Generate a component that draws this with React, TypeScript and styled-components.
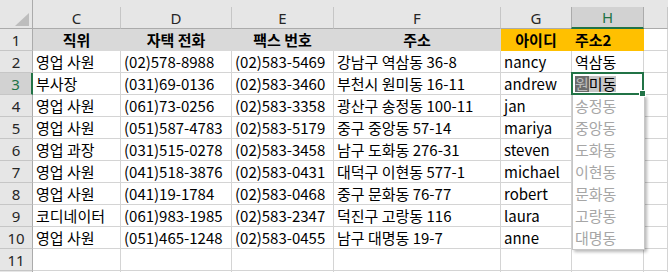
import React from "react";
import styled, { createGlobalStyle, css } from "styled-components";

const GlobalStyle = createGlobalStyle`
  html, body {
    margin: 0;
    padding: 0;
    background: #ffffff;
  }
  body {
    font-family: "Noto Sans CJK KR", "Noto Sans", sans-serif;
  }
`;

const COLS = "33px 88px 111px 102px 167px 71px 72px 1fr";
const GRID = "#d4d4d4";
const GREEN = "#217346";

const Sheet = styled.div`
  width: 668px;
  height: 272px;
  overflow: hidden;
  background: #fff;
  font-size: 15px;
  color: #000;
`;

const HeaderRow = styled.div`
  display: grid;
  grid-template-columns: ${COLS};
  height: 29px;
  padding-top: 7px;
  box-sizing: border-box;
  background: #e6e6e6;
`;

const Corner = styled.div`
  position: relative;
  border-right: 1px solid #ababab;
  border-bottom: 1px solid #ababab;
  margin-top: -7px;
  box-sizing: border-box;
`;

const CornerMark = styled.svg`
  position: absolute;
  right: 3px;
  bottom: 2px;
`;

const ColHead = styled.div<{ $selected?: boolean }>`
  display: flex;
  align-items: center;
  justify-content: center;
  box-sizing: border-box;
  border-right: 1px solid #c6c6c6;
  border-bottom: 1px solid #ababab;
  color: #262626;
  font-family: "Noto Sans", sans-serif;
  font-size: 15px;
  ${(p) =>
    p.$selected &&
    css`
      background: #d2d2d2;
      color: ${GREEN};
      border-left: 1px solid #ababab;
      margin-left: -1px;
      border-right-color: #ababab;
      border-bottom: 2px solid ${GREEN};
    `}
`;

const Row = styled.div<{ $short?: boolean }>`
  display: grid;
  grid-template-columns: ${COLS};
  height: 22px;
`;

const RowHead = styled.div<{ $selected?: boolean }>`
  display: flex;
  align-items: center;
  justify-content: center;
  box-sizing: border-box;
  background: #e6e6e6;
  border-right: 1px solid #ababab;
  border-bottom: 1px solid #c6c6c6;
  color: #262626;
  font-family: "Noto Sans", sans-serif;
  font-size: 15px;
  ${(p) =>
    p.$selected &&
    css`
      background: #d2d2d2;
      color: ${GREEN};
      border-right: 2px solid ${GREEN};
    `}
`;

const Cell = styled.div<{ $fill?: string; $center?: boolean; $bold?: boolean }>`
  position: relative;
  display: flex;
  align-items: center;
  justify-content: ${(p) => (p.$center ? "center" : "flex-start")};
  padding-left: ${(p) => (p.$center ? "0" : "3px")};
  box-sizing: border-box;
  white-space: nowrap;
  line-height: 16px;
  border-right: 1px solid ${(p) => p.$fill || GRID};
  border-bottom: 1px solid ${(p) => p.$fill || GRID};
  background: ${(p) => p.$fill || "#fff"};
  font-weight: ${(p) => (p.$bold ? 700 : 400)};
`;

const Selection = styled.div`
  position: absolute;
  top: -1px;
  left: -1px;
  right: -1px;
  bottom: -1px;
  border: 2px solid ${GREEN};
  pointer-events: none;
  z-index: 3;
`;

const FillHandle = styled.div`
  position: absolute;
  right: -4px;
  bottom: -4px;
  width: 5px;
  height: 5px;
  background: ${GREEN};
  border: 1px solid #fff;
`;

const Typed = styled.span`
  display: inline-block;
  background: #6b6b6b;
  color: #bcbcbc;
`;

const Suggested = styled.span`
  display: inline-block;
  background: #c6c6c6;
  color: #000;
`;

const Dropdown = styled.ul`
  position: absolute;
  top: 100%;
  left: 0;
  width: 71px;
  margin: 1px 0 0;
  padding: 0;
  list-style: none;
  background: #fff;
  border: 1px solid #c6c6c6;
  border-top: none;
  box-shadow: 2px 2px 3px rgba(0, 0, 0, 0.28);
  z-index: 2;
`;

const Option = styled.li`
  height: 22px;
  display: flex;
  align-items: center;
  padding-left: 2px;
  color: #a6a6a6;
  line-height: 16px;
`;

const headers = [
  { text: "직위", fill: "#d9d9d9", center: true },
  { text: "자택 전화", fill: "#d9d9d9", center: true },
  { text: "팩스 번호", fill: "#d9d9d9", center: true },
  { text: "주소", fill: "#d9d9d9", center: true },
  { text: "아이디", fill: "#ffc000", center: true },
  { text: "주소2", fill: "#ffc000", center: false },
];

const data: string[][] = [
  ["영업 사원", "(02)578-8988", "(02)583-5469", "강남구 역삼동 36-8", "nancy", "역삼동"],
  ["부사장", "(031)69-0136", "(02)583-3460", "부천시 원미동 16-11", "andrew", ""],
  ["영업 사원", "(061)73-0256", "(02)583-3358", "광산구 송정동 100-11", "jan", ""],
  ["영업 사원", "(051)587-4783", "(02)583-5179", "중구 중앙동 57-14", "mariya", ""],
  ["영업 과장", "(031)515-0278", "(02)583-3458", "남구 도화동 276-31", "steven", ""],
  ["영업 사원", "(041)518-3876", "(02)583-0431", "대덕구 이현동 577-1", "michael", ""],
  ["영업 사원", "(041)19-1784", "(02)583-0468", "중구 문화동 76-77", "robert", ""],
  ["코디네이터", "(061)983-1985", "(02)583-2347", "덕진구 고랑동 116", "laura", ""],
  ["영업 사원", "(051)465-1248", "(02)583-0455", "남구 대명동 19-7", "anne", ""],
];

const suggestions = ["송정동", "중앙동", "도화동", "이현동", "문화동", "고랑동", "대명동"];

const columns = ["C", "D", "E", "F", "G", "H"];

const App = () => {
  return (
    <Sheet>
      <GlobalStyle />
      <HeaderRow>
        <Corner>
          <CornerMark width="14" height="13" viewBox="0 0 14 13">
            <polygon points="14,0 14,13 0,13" fill="#bdbdbd" />
          </CornerMark>
        </Corner>
        {columns.map((c) => (
          <ColHead key={c} $selected={c === "H"}>
            {c}
          </ColHead>
        ))}
        <ColHead />
      </HeaderRow>

      <Row>
        <RowHead>1</RowHead>
        {headers.map((h) => (
          <Cell key={h.text} $fill={h.fill} $center={h.center} $bold>
            {h.text}
          </Cell>
        ))}
        <Cell />
      </Row>

      {data.map((r, i) => {
        const n = i + 2;
        const active = n === 3;
        return (
          <Row key={n}>
            <RowHead $selected={active}>{n}</RowHead>
            {r.slice(0, 5).map((v, j) => (
              <Cell key={j}>{v}</Cell>
            ))}
            <Cell>
              {active ? (
                <>
                  <Typed>원</Typed>
                  <Suggested>미동</Suggested>
                  <Selection>
                    <FillHandle />
                  </Selection>
                  <Dropdown>
                    {suggestions.map((s) => (
                      <Option key={s}>{s}</Option>
                    ))}
                  </Dropdown>
                </>
              ) : (
                r[5]
              )}
            </Cell>
            <Cell />
          </Row>
        );
      })}

      {/* row 11 plus the top edge of row 12, which the window cuts off */}
      {[11, 12].map((n) => (
        <Row key={n}>
          <RowHead>{n === 11 ? n : ""}</RowHead>
          {columns.map((c) => (
            <Cell key={c} />
          ))}
          <Cell />
        </Row>
      ))}
    </Sheet>
  );
};

export default App;
